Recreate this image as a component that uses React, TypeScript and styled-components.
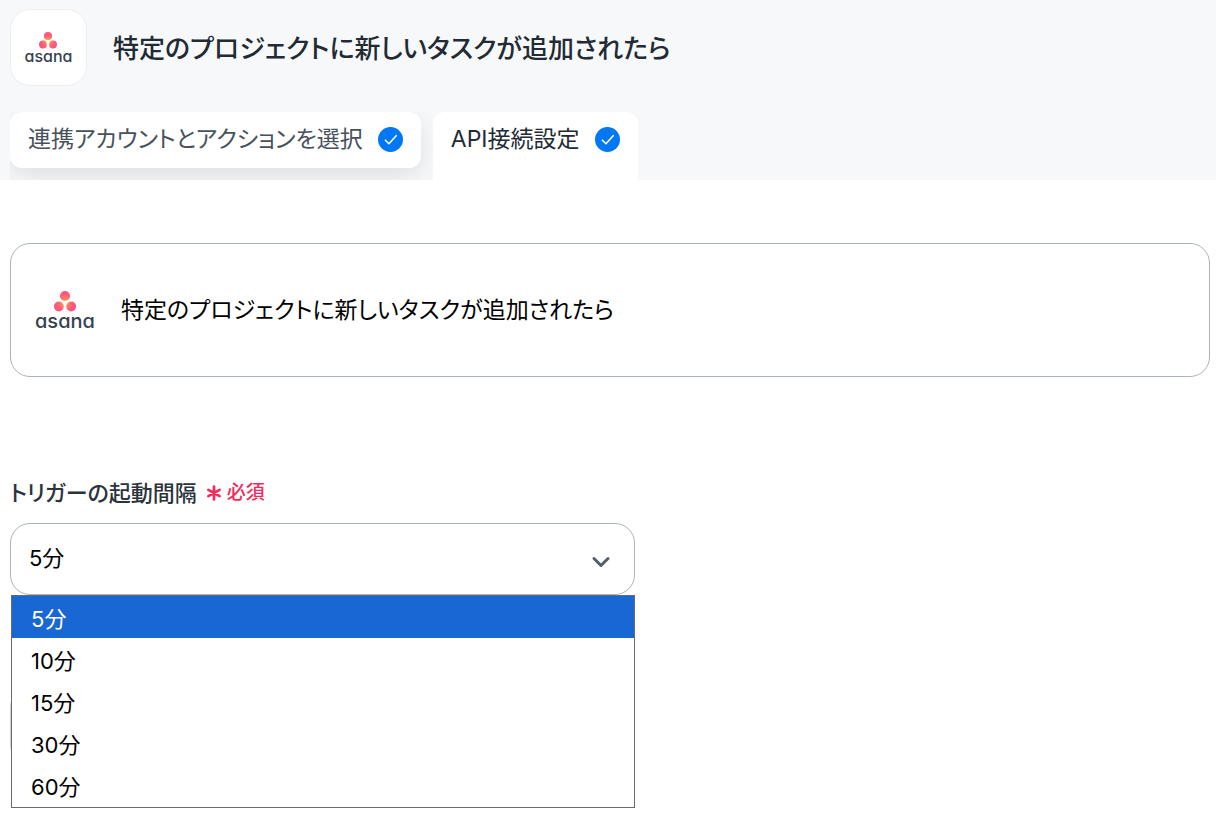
import React, { useState } from "react";
import styled, { createGlobalStyle } from "styled-components";

const GlobalStyle = createGlobalStyle`
  *, *::before, *::after { box-sizing: border-box; }
  body {
    margin: 0;
    background: #fff;
    color: #000;
    font-family: Inter, "Noto Sans CJK JP", sans-serif;
    font-size: 22px;
    line-height: 32px;
    font-feature-settings: "palt";
  }
`;

const Header = styled.header`
  padding: 9px 10px 0;
  background: #f7f8fa;
`;

const TitleRow = styled.div`
  display: flex;
  align-items: center;
  gap: 26px;
  margin-bottom: 26px;
`;

const AppBadge = styled.div`
  display: flex;
  align-items: center;
  justify-content: center;
  width: 77px;
  height: 77px;
  border: 1px solid #ebedf0;
  border-radius: 20px;
  background: #fff;
`;

const Title = styled.h1`
  margin: 0;
  padding-top: 2px;
  color: #222b33;
  font-size: 26px;
  font-weight: 500;
  line-height: 36px;
`;

const TabBar = styled.nav`
  display: flex;
  align-items: flex-start;
  gap: 12px;
  width: fit-content;
  overflow: hidden;
`;

const Tab = styled.button<{ $active?: boolean }>`
  display: flex;
  align-items: center;
  gap: 15px;
  margin: 0 0 ${(p) => (p.$active ? 0 : 12)}px;
  padding: 11px 18px ${(p) => (p.$active ? 25 : 13)}px;
  border: 0;
  border-radius: ${(p) => (p.$active ? "12px 12px 0 0" : "12px")};
  background: #fff;
  box-shadow: ${(p) => (p.$active ? "none" : "0 8px 24px rgba(0, 0, 0, 0.1)")};
  color: ${(p) => (p.$active ? "#222b33" : "#47515b")};
  font: inherit;
  font-size: 23px;
  font-feature-settings: inherit;
  position: relative;
  cursor: pointer;
`;

const CheckSvg = styled.svg`
  display: block;
  width: 25px;
  height: 25px;
`;

const LogoBox = styled.div<{ $large?: boolean }>`
  display: flex;
  flex-direction: column;
  align-items: center;
  color: #37424f;
  font-size: ${(p) => (p.$large ? 20 : 16)}px;
  line-height: ${(p) => (p.$large ? 18 : 14)}px;
  font-weight: 500;
  font-feature-settings: "cv11";

  svg {
    display: block;
    width: ${(p) => (p.$large ? 22 : 18)}px;
    height: ${(p) => (p.$large ? 21 : 17)}px;
  }
`;

const Main = styled.main`
  padding: 63px 6px 48px 10px;
`;

const ActionCard = styled.section`
  display: flex;
  align-items: center;
  gap: 26px;
  height: 134px;
  padding: 0 24px;
  border: 1px solid #aab4c0;
  border-radius: 20px;
  font-size: 23px;
`;

const Field = styled.div`
  max-width: 625px;
  margin-top: 100px;
`;

const FieldLabel = styled.label`
  display: flex;
  align-items: center;
  gap: 10px;
  margin-bottom: 14px;
  color: #2b333c;
  font-weight: 500;
`;

const Required = styled.span`
  display: flex;
  align-items: center;
  gap: 6px;
  color: #f42a5b;
  font-size: 19px;

  svg {
    display: block;
    width: 14px;
    height: 16px;
  }
`;

const SelectWrap = styled.div`
  position: relative;
`;

const Select = styled.select`
  appearance: none;
  display: block;
  width: 100%;
  height: 72px;
  padding: 0 48px 2px 18px;
  border: 1px solid #aab4c0;
  border-radius: 20px;
  background: #fff;
  color: #000;
  font: inherit;
  outline: none;
`;

const Chevron = styled.svg`
  position: absolute;
  top: 32px;
  right: 24px;
  width: 20px;
  height: 14px;
  pointer-events: none;
`;

const Menu = styled.ul`
  position: absolute;
  z-index: 1;
  top: 100%;
  left: 1px;
  right: 0;
  margin: 0;
  padding: 0 0 1px;
  border: 1px solid #6b6b6b;
  background: #fff;
  list-style: none;
`;

const MenuItem = styled.li<{ $selected: boolean }>`
  padding: 7px 19px 3px;
  background: ${(p) => (p.$selected ? "#1967d2" : "#fff")};
  color: ${(p) => (p.$selected ? "#fff" : "#000")};
  cursor: default;
`;

const NextField = styled.div`
  height: 78px;
  width: 50%;
  margin-top: 92px;
  border: 1px solid #c9cfe0;
  border-radius: 20px;
`;

const intervals = [5, 10, 15, 30, 60];

function AsanaLogo({ id, large }: { id: string; large?: boolean }) {
  return (
    <LogoBox $large={large}>
      <svg viewBox="0 0 22 21" aria-hidden="true">
        <defs>
          <radialGradient id={id} gradientUnits="userSpaceOnUse" cx="11" cy="11.5" r="11">
            <stop offset="0" stopColor="#ffb045" />
            <stop offset="0.3" stopColor="#ff8a56" />
            <stop offset="0.65" stopColor="#ff5f78" />
            <stop offset="1" stopColor="#fb5384" />
          </radialGradient>
        </defs>
        <g fill={`url(#${id})`}>
          <circle cx="11" cy="5" r="5" />
          <circle cx="4.8" cy="15.5" r="4.9" />
          <circle cx="17.2" cy="15.5" r="4.9" />
        </g>
      </svg>
      <span>asana</span>
    </LogoBox>
  );
}

function CheckIcon() {
  return (
    <CheckSvg viewBox="0 0 25 25" aria-hidden="true">
      <circle cx="12.5" cy="12.5" r="12.5" fill="#0078f5" />
      <path
        d="M7.4 13.2L10.9 16.7L18.2 8.7"
        fill="none"
        stroke="#fff"
        strokeWidth="1.6"
        strokeLinecap="round"
        strokeLinejoin="round"
      />
    </CheckSvg>
  );
}

export default function App() {
  const [minutes, setMinutes] = useState(5);

  return (
    <>
      <GlobalStyle />
      <Header>
        <TitleRow>
          <AppBadge>
            <AsanaLogo id="dots-small" />
          </AppBadge>
          <Title>特定のプロジェクトに新しいタスクが追加されたら</Title>
        </TitleRow>
        <TabBar>
          <Tab type="button">
            連携アカウントとアクションを選択
            <CheckIcon />
          </Tab>
          <Tab type="button" $active>
            API接続設定
            <CheckIcon />
          </Tab>
        </TabBar>
      </Header>
      <Main>
        <ActionCard>
          <AsanaLogo id="dots-large" large />
          <span>特定のプロジェクトに新しいタスクが追加されたら</span>
        </ActionCard>
        <Field>
          <FieldLabel htmlFor="interval">
            トリガーの起動間隔
            <Required>
              <svg viewBox="0 0 14 16" aria-hidden="true">
                <path
                  d="M7 1.5V14.5M1.4 4.8L12.6 11.2M12.6 4.8L1.4 11.2"
                  stroke="currentColor"
                  strokeWidth="2.7"
                  strokeLinecap="round"
                />
              </svg>
              必須
            </Required>
          </FieldLabel>
          <SelectWrap>
            <Select id="interval" value={minutes} onChange={(e) => setMinutes(Number(e.target.value))}>
              {intervals.map((m) => (
                <option key={m} value={m}>
                  {m}分
                </option>
              ))}
            </Select>
            <Chevron viewBox="0 0 20 14" aria-hidden="true">
              <path
                d="M3 3.5L10 10.5L17 3.5"
                fill="none"
                stroke="#545d69"
                strokeWidth="3"
                strokeLinecap="round"
                strokeLinejoin="round"
              />
            </Chevron>
            <Menu role="listbox" aria-label="トリガーの起動間隔">
              {intervals.map((m) => (
                <MenuItem
                  key={m}
                  role="option"
                  aria-selected={m === minutes}
                  $selected={m === minutes}
                  onClick={() => setMinutes(m)}
                >
                  {m}分
                </MenuItem>
              ))}
            </Menu>
          </SelectWrap>
        </Field>
        <NextField />
      </Main>
    </>
  );
}
